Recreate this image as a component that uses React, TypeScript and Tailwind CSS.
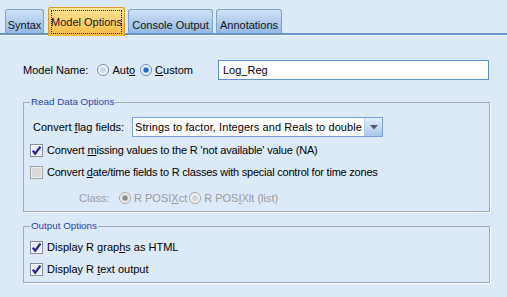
import React from "react";

function Radio({ on, disabled }: { on: boolean; disabled?: boolean }) {
  const ring = disabled ? "#a8a8a8" : "#7089ad";
  return (
    <svg width="12" height="12" viewBox="0 0 12 12" className="shrink-0">
      <circle cx="6" cy="6" r="5.5" fill={disabled ? "#f0f0f0" : "#f5f8fc"} stroke={ring} />
      {on ? (
        <circle cx="6" cy="6" r="3" fill={disabled ? "#8c8c8c" : "#2466cc"} stroke={disabled ? "#c8c8c8" : "#a9c6ee"} strokeWidth="1" />
      ) : (
        <circle cx="6" cy="6" r="3" fill={disabled ? "#d6d6d6" : "#cad7e8"} />
      )}
    </svg>
  );
}

function Check({ on }: { on: boolean }) {
  return (
    <svg width="13" height="13" viewBox="0 0 13 13" className="shrink-0">
      <rect x="0.5" y="0.5" width="12" height="12" fill={on ? "#f4f5f8" : "#e6e6e6"} stroke={on ? "#8a8c9c" : "#a3a3a3"} />
      <rect x="1.5" y="1.5" width="10" height="10" fill={on ? "#e9ebf1" : "#d9d9d9"} stroke={on ? "#f8f9fb" : "#f0f0f0"} />
      {on && <path d="M2.8 6.6 L5.2 9.6 L10.4 2.6" stroke="#25248e" strokeWidth="2.2" fill="none" strokeLinejoin="miter" />}
    </svg>
  );
}

function Tab({ label, w }: { label: string; w: string }) {
  return (
    <div
      className={`${w} h-[24px] flex items-center justify-center pt-[7px] whitespace-nowrap rounded-t-[3px] border border-b-0 border-[#7fa2cd] bg-gradient-to-b from-[#cfe1f5] to-[#94b8e2] text-[#141414] leading-[13px]`}
    >
      {label}
    </div>
  );
}

export default function App() {
  return (
    <div className="w-[507px] h-[297px] overflow-hidden bg-[#dce9f9] font-['Liberation_Sans',Arial,sans-serif] text-[11px] text-black leading-[13px]">
      {/* tab strip */}
      <div className="h-[33px] flex items-end pl-[5px]">
        <Tab label="Syntax" w="w-[39px]" />
        <div className="relative z-10 ml-[4px] -mb-[3px] w-[77px] h-[29px] p-[2px] rounded-t-[3px] border border-b-0 border-[#dc9a2c] bg-gradient-to-b from-[#ffe597] to-[#f9b83e]">
          <div className="h-full border border-dotted border-[#222] flex items-center justify-center whitespace-nowrap text-[#141414] pt-[1px]">
            Model Options
          </div>
        </div>
        <div className="ml-[3px]">
          <Tab label="Console Output" w="w-[85px]" />
        </div>
        <div className="ml-[3px]">
          <Tab label="Annotations" w="w-[66px]" />
        </div>
      </div>
      <div className="h-[2px] bg-[#6a93c7]" />
      <div className="h-[1px] bg-[#f2f7fd]" />

      {/* model name row */}
      <div className="mt-[24px] ml-[23px] flex items-center h-[20px]">
        <div className="w-[195px] flex items-center">
          <span>Model Name:</span>
          <span className="ml-[9px]"><Radio on={false} /></span>
          <span className="ml-[3px]">Aut<u>o</u></span>
          <span className="ml-[5px]"><Radio on={true} /></span>
          <span className="ml-[3px]"><u>C</u>ustom</span>
        </div>
        <div className="w-[271px] h-[20px] bg-white border border-[#5d8fd4] flex items-center pl-[4px]">Log_Reg</div>
      </div>

      {/* Read Data Options */}
      <fieldset className="mt-[16px] ml-[23px] w-[467px] border border-[#a3a9b2] shadow-[1px_1px_0_#ffffff] pb-[5px]">
        <legend className="ml-[6px] px-[1px] text-[9.8px] leading-[12px] text-[#2846a8]">Read Data Options</legend>
        <div className="mt-[9px] ml-[9px] flex items-center h-[20px]">
          <span className="w-[99px]">Convert <u>f</u>lag fields:</span>
          <div className="w-[251px] h-[20px] bg-white border border-[#7aa0d8] flex items-center">
            <span className="flex-1 pl-[2px] whitespace-nowrap tracking-[0.08px]">Strings to factor, Integers and Reals to double</span>
            <div className="w-[18px] h-full bg-gradient-to-b from-[#e3eefb] to-[#a9c7ec] border-l border-[#b9cfee] flex items-center justify-center">
              <svg width="8" height="5" viewBox="0 0 8 5"><path d="M0 0 H8 L4 4.5 Z" fill="#555b66" /></svg>
            </div>
          </div>
        </div>
        <div className="mt-[5px] ml-[6px] flex items-center h-[16px]">
          <Check on={true} />
          <span className="ml-[4px] tracking-[-0.15px]">Convert <u>m</u>issing values to the R 'not available' value (NA)</span>
        </div>
        <div className="mt-[6px] ml-[6px] flex items-center h-[16px]">
          <Check on={false} />
          <span className="ml-[4px] tracking-[-0.22px]">Convert <u>d</u>ate/time fields to R classes with special control for time zones</span>
        </div>
        <div className="mt-[10px] ml-[55px] flex items-center h-[16px] text-[#9b9b9b]">
          <span className="w-[40px]">Class:</span>
          <Radio on={true} disabled />
          <span className="ml-[3px]">R POSI<u>X</u>ct</span>
          <span className="ml-[2px]"><Radio on={false} disabled /></span>
          <span className="ml-[3px]">R POS<u>I</u>Xlt (list)</span>
        </div>
      </fieldset>

      {/* Output Options */}
      <fieldset className="mt-[8px] ml-[23px] w-[467px] border border-[#a3a9b2] shadow-[1px_1px_0_#ffffff] pb-[5px]">
        <legend className="ml-[6px] px-[1px] text-[9.8px] leading-[12px] text-[#2846a8]">Output Options</legend>
        <div className="mt-[7px] ml-[6px] flex items-center h-[16px]">
          <Check on={true} />
          <span className="ml-[4px]">Display R grap<u>h</u>s as HTML</span>
        </div>
        <div className="mt-[6px] ml-[6px] flex items-center h-[16px]">
          <Check on={true} />
          <span className="ml-[4px]">Display R <u>t</u>ext output</span>
        </div>
      </fieldset>
    </div>
  );
}
